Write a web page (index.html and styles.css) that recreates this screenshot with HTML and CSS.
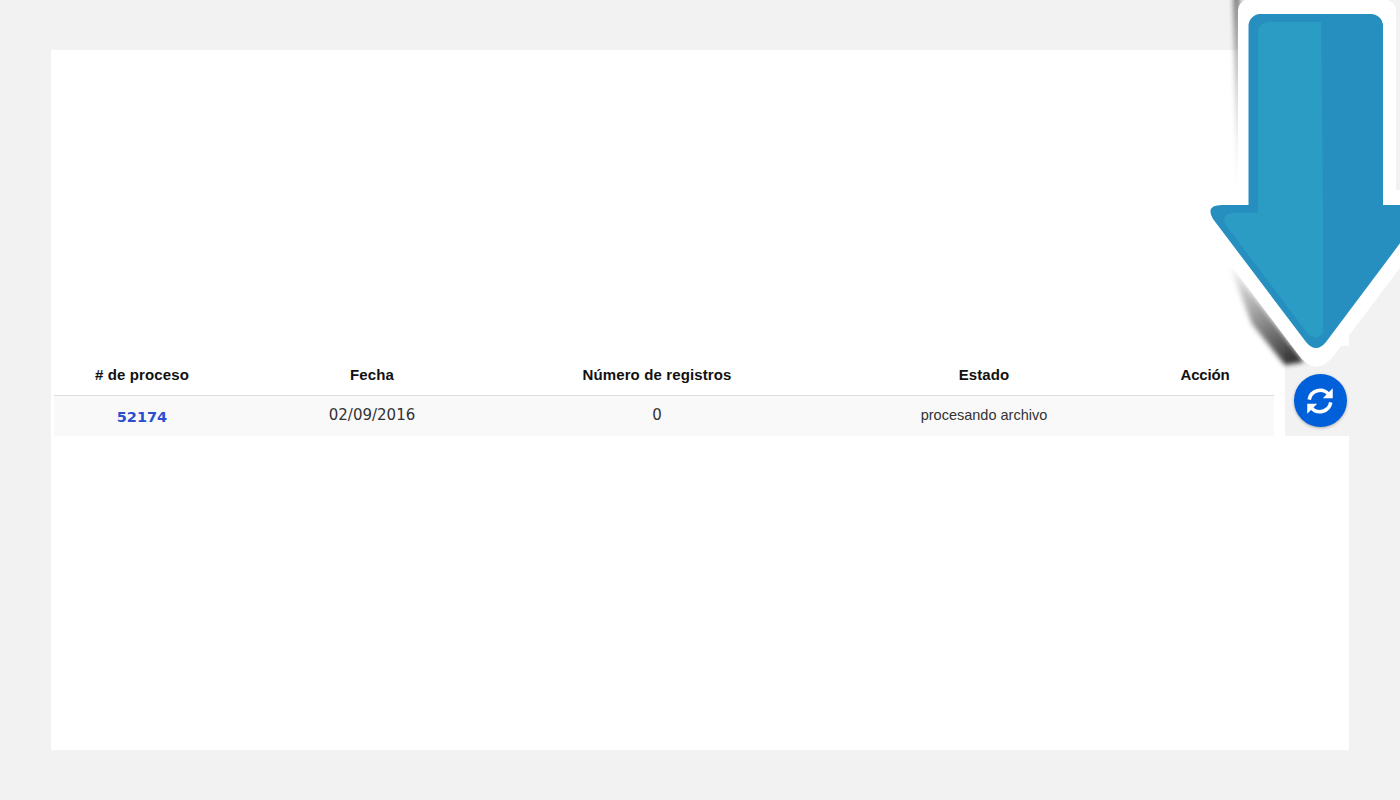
FILE: index.html
```html
<!DOCTYPE html>
<html lang="es">
<head>
<meta charset="utf-8">
<title>Procesos</title>
<link rel="stylesheet" href="styles.css">
</head>
<body>
<main class="card">
  <div class="content">
    <table class="grid">
      <colgroup>
        <col class="c1"><col class="c2"><col class="c3"><col class="c4"><col class="c5">
      </colgroup>
      <thead>
        <tr>
          <th># de proceso</th>
          <th>Fecha</th>
          <th>Número de registros</th>
          <th>Estado</th>
          <th class="action">Acción</th>
        </tr>
      </thead>
      <tbody>
        <tr>
          <td class="id"><a class="link" href="#">52174</a></td>
          <td class="num">02/09/2016</td>
          <td class="num">0</td>
          <td class="state">procesando archivo</td>
          <td class="action"></td>
        </tr>
      </tbody>
    </table>
    <aside class="side">
      <button class="refresh" type="button" aria-label="Actualizar">
        <svg class="refresh-icon" viewBox="0 0 24 24" aria-hidden="true">
          <path class="sync-arc" d="M4.400 11A7.800 7.800 0 0 1 18 7.200"/>
          <path class="sync-arc" d="M19.600 13A7.800 7.800 0 0 1 6 16.800"/>
          <path class="sync-head" d="M21 3V10H14Z"/>
          <path class="sync-head" d="M3 21V14H10Z"/>
        </svg>
      </button>
    </aside>
  </div>
</main>
<svg class="arrow" viewBox="0 0 1400 800" aria-hidden="true">
  <defs>
    <linearGradient id="shadeV" x1="0" y1="0" x2="0" y2="1">
      <stop offset="0" stop-color="#000" stop-opacity=".5"/>
      <stop offset=".5" stop-color="#000" stop-opacity=".22"/>
      <stop offset="1" stop-color="#000" stop-opacity="0"/>
    </linearGradient>
    <linearGradient id="shadeD" gradientUnits="userSpaceOnUse" x1="1230" y1="264" x2="1300" y2="358">
      <stop offset="0" stop-color="#000" stop-opacity="0"/>
      <stop offset=".5" stop-color="#000" stop-opacity=".4"/>
      <stop offset="1" stop-color="#000" stop-opacity=".8"/>
    </linearGradient>
    <filter id="soft" x="-50%" y="-10%" width="200%" height="120%"><feGaussianBlur stdDeviation="2.500"/></filter>
  </defs>
  <path d="M1233 -6H1240V190H1238Z" fill="url(#shadeV)" filter="url(#soft)"/>
  <path d="M1228 262L1304 362L1285 365L1252 324Z" fill="url(#shadeD)" filter="url(#soft)"/>
  <path class="a-outline" d="M1248 0H1386A10 10 0 0 1 1396 10V190H1440V215L1335 354Q1316 380 1297 353L1200 224L1238 190V10A10 10 0 0 1 1248 0Z"/>
  <path class="a-dark" d="M1260 14H1371A12 12 0 0 1 1383 26V205H1410V230L1326 342Q1316 354 1306 342L1213 219Q1205 205 1222 205H1248.500V26A12 12 0 0 1 1260 14Z"/>
  <path class="a-light" d="M1268 22H1321L1323 205V333Q1316 341 1308 334L1226 225Q1220 213 1234 213H1258V32A10 10 0 0 1 1268 22Z"/>
</svg>
</body>
</html>
```

FILE: styles.css
```css
html, body {
  margin: 0;
  padding: 0;
}
body {
  height: 800px;
  overflow: hidden;
  background: #f2f2f2;
  font-family: "Liberation Sans", Arial, sans-serif;
  color: #333;
}
.card {
  margin: 50px 51px;
  height: 700px;
  background: #fff;
  box-sizing: border-box;
  padding-top: 296px;
}
.content {
  display: flex;
  align-items: flex-end;
  padding-left: 3px;
}
.grid {
  width: 1220px;
  table-layout: fixed;
  border-collapse: collapse;
  margin-right: 11px;
}
.c1 { width: 176px; }
.c2 { width: 284px; }
.c3 { width: 286px; }
.c4 { width: 368px; }
.c5 { width: 106px; }
.grid th {
  height: 48px;
  padding: 7px 0 0;
  box-sizing: border-box;
  font-size: 15px;
  font-weight: 700;
  letter-spacing: .12px;
  color: #111;
  text-align: center;
  border-bottom: 1px solid #ddd;
}
.grid td {
  height: 41px;
  padding: 0 0 2px;
  box-sizing: border-box;
  font-size: 14.500px;
  text-align: center;
  background: #f9f9f9;
  color: #333;
}
.grid .id { padding: 2px 0 0; }
.grid .action {
  padding-right: 32px;
  letter-spacing: -.2px;
}
.grid .num {
  font-family: "DejaVu Sans", sans-serif;
  font-size: 15px;
}
.link {
  color: #2a4fd0;
  font-family: "DejaVu Sans", sans-serif;
  font-size: 14.500px;
  font-weight: 700;
  text-decoration: none;
}
.side {
  width: 64px;
  height: 90px;
  box-sizing: border-box;
  background: #f2f2f2;
  display: flex;
  justify-content: center;
  padding: 28px 0 0 6px;
}
.refresh {
  width: 53px;
  height: 53px;
  padding: 0;
  border: 0;
  border-radius: 50%;
  background: #0060d9;
  box-shadow: 0 1px 3px rgba(0,0,0,.3);
  display: flex;
  align-items: center;
  justify-content: center;
}
.refresh-icon {
  width: 34px;
  height: 34px;
}
.sync-arc {
  fill: none;
  stroke: #fff;
  stroke-width: 2.500;
}
.sync-head { fill: #fff; }
.arrow {
  position: absolute;
  left: 0;
  top: 0;
  width: 1400px;
  height: 800px;
}
.a-outline { fill: #fff; }
.a-dark { fill: #278fbf; }
.a-light { fill: #2b9cc4; }
```
